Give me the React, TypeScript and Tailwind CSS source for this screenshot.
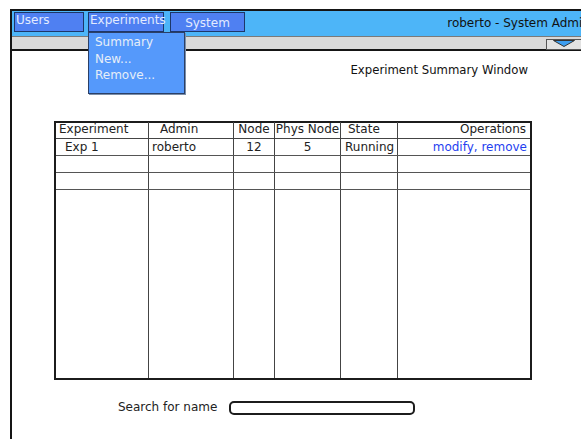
const columns = [
  { label: 'Experiment', align: 'text-left pl-[3px]' },
  { label: 'Admin', align: 'text-left pl-[11px]' },
  { label: 'Node', align: 'text-center' },
  { label: 'Phys Node', align: 'text-center' },
  { label: 'State', align: 'text-left pl-[7px]' },
  { label: 'Operations', align: 'text-right pr-[4px]' },
];

const rows = [
  ['Exp 1', 'roberto', '12', '5', 'Running', 'modify, remove'],
  ['', '', '', '', '', ''],
  ['', '', '', '', '', ''],
];

const rowAlign = [
  'text-left pl-[9px]',
  'text-left pl-[3px]',
  'text-center',
  'text-center',
  'text-left pl-[4px]',
  'text-right pr-[3px]',
];

const gridCols = 'grid grid-cols-[93px_85px_41px_66px_57px_132px]';

function MenuButton({ label, className }: { label: string; className: string }) {
  return (
    <div
      className={`h-[20px] bg-[#4f80f2] border border-[#1d3769] text-[12px] leading-[14px] text-[#e3ebff] ${className}`}
    >
      {label}
    </div>
  );
}

export default function App() {
  return (
    <div
      className="w-[581px] h-[439px] overflow-hidden bg-white text-[#222]"
      style={{ fontFamily: '"DejaVu Sans", Verdana, sans-serif' }}
    >
      <div className="ml-[10px] mt-[9px] w-[620px] h-[440px] border-l-2 border-t-2 border-[#151515] relative flex flex-col">
        {/* title bar with menus */}
        <div className="h-[25px] bg-[#4db5f8] flex items-start pt-[1px] pl-[2px]">
          <MenuButton label="Users" className="w-[70px] pl-[1px]" />
          <MenuButton label="Experiments" className="w-[76px] ml-[4px] pl-[1px]" />
          <MenuButton label="System" className="w-[75px] ml-[6px] text-center pt-[3px]" />
          <div className="ml-auto pr-[40px] pt-[4px] text-[12px] leading-[14px] text-[#111] whitespace-nowrap">
            roberto - System Admin
          </div>
        </div>

        {/* toolbar strip */}
        <div className="h-[15px] bg-[#d9d9d9] border-t border-[#7a7a7a] border-b-2 border-b-[#151515] flex justify-end">
          <div className="w-[72px] h-[11px] mt-[2px] mr-[12px] border border-[#555] bg-[#e2e2e2] flex items-start pl-[6px]">
            <svg width="22" height="7" viewBox="0 0 22 7">
              <path d="M0.5 0.5 L21.5 0.5 L11 6.5 Z" fill="#3d9ef0" stroke="#333" strokeWidth="1" />
            </svg>
          </div>
        </div>

        {/* experiments dropdown */}
        <div className="absolute left-[76px] top-[21px] w-[97px] h-[62px] bg-[#5599fb] border border-[#2b3f66] pl-[6px] pt-[1px] text-[12px] leading-[16.5px] text-[#e6eef8] shadow-[1px_1px_0_#7b8ea8]">
          <div>Summary</div>
          <div>New...</div>
          <div>Remove...</div>
        </div>

        {/* window body */}
        <div className="w-[569px] flex flex-col">
          <div className="mt-[12px] pr-[53px] text-right text-[11.7px] leading-[15px] text-[#111]">
            Experiment Summary Window
          </div>

          <div className="ml-[42px] mt-[43px] w-[478px] h-[259px] border-2 border-[#1c1c1c] flex flex-col text-[12px] leading-[15px]">
            <div className={`${gridCols} h-[16px] border-b border-[#444]`}>
              {columns.map((c, i) => (
                <div
                  key={c.label}
                  className={`${c.align} ${i < columns.length - 1 ? 'border-r border-[#444]' : ''} -mt-[1px]`}
                >
                  {c.label}
                </div>
              ))}
            </div>
            {rows.map((r, ri) => (
              <div key={ri} className={`${gridCols} h-[17px] border-b border-[#555]`}>
                {r.map((cell, i) => (
                  <div
                    key={i}
                    className={`${rowAlign[i]} ${i < r.length - 1 ? 'border-r border-[#444]' : ''} ${
                      i === 5 ? 'text-[#1f3ff0]' : ''
                    } pt-[1px]`}
                  >
                    {cell}
                  </div>
                ))}
              </div>
            ))}
            <div className={`${gridCols} flex-1`}>
              {columns.map((c, i) => (
                <div key={c.label} className={i < columns.length - 1 ? 'border-r border-[#444]' : ''} />
              ))}
            </div>
          </div>

          <div className="ml-[106px] mt-[20px] flex items-center text-[12px] leading-[15px]">
            <span>Search for name</span>
            <div className="ml-[12px] w-[186px] h-[14px] border-2 border-[#1c1c1c] rounded-[5px]" />
          </div>
        </div>
      </div>
    </div>
  );
}
